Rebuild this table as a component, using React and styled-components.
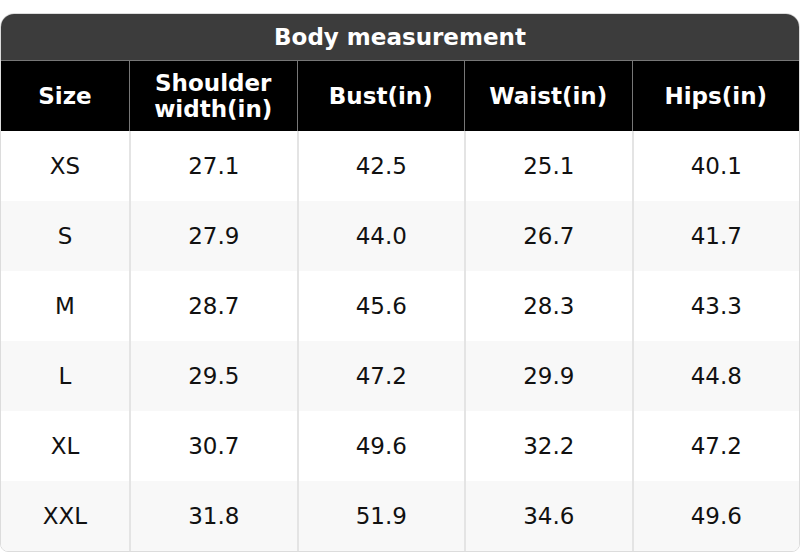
import React from 'react';
import styled, { createGlobalStyle } from 'styled-components';

const GlobalStyle = createGlobalStyle`
  html, body {
    margin: 0;
    padding: 0;
    background: #fff;
    font-family: "DejaVu Sans", "Liberation Sans", sans-serif;
  }
`;

const Page = styled.div`
  padding-top: 13px;
  width: 800px;
`;

const Card = styled.div`
  border: 1px solid #dcdcdc;
  border-radius: 14px 14px 8px 8px;
  overflow: hidden;
  box-sizing: border-box;
`;

const Title = styled.div`
  background: #3c3c3c;
  color: #fff;
  font-weight: bold;
  font-size: 23px;
  height: 46px;
  display: flex;
  align-items: center;
  justify-content: center;
  border-bottom: 1px solid #777;
`;

const Row = styled.div`
  display: grid;
  grid-template-columns: 128px 1fr 1fr 1fr 1fr;
  height: 70px;
  background: ${(p) => (p.$head ? '#000' : p.$alt ? '#f8f8f8' : '#fff')};
  color: ${(p) => (p.$head ? '#fff' : '#111')};
`;

const Cell = styled.div`
  display: flex;
  align-items: center;
  justify-content: center;
  text-align: center;
  font-size: 23px;
  font-weight: ${(p) => (p.$head ? 'bold' : 'normal')};
  line-height: 26px;
  border-left: ${(p) => (p.$first ? 'none' : p.$head ? '1px solid #777' : '2px solid #e4e4e4')};
  padding-bottom: ${(p) => (p.$head ? '0' : '1px')};
`;

const headers = ['Size', 'Shoulder\nwidth(in)', 'Bust(in)', 'Waist(in)', 'Hips(in)'];

const data = [
  ['XS', '27.1', '42.5', '25.1', '40.1'],
  ['S', '27.9', '44.0', '26.7', '41.7'],
  ['M', '28.7', '45.6', '28.3', '43.3'],
  ['L', '29.5', '47.2', '29.9', '44.8'],
  ['XL', '30.7', '49.6', '32.2', '47.2'],
  ['XXL', '31.8', '51.9', '34.6', '49.6'],
];

export default function App() {
  return (
    <Page>
      <GlobalStyle />
      <Card>
        <Title>Body measurement</Title>
        <Row $head>
          {headers.map((h, i) => (
            <Cell key={h} $head $first={i === 0}>
              {h.split('\n').map((line, j) => (
                <React.Fragment key={j}>
                  {j > 0 && <br />}
                  {line}
                </React.Fragment>
              ))}
            </Cell>
          ))}
        </Row>
        {data.map((r, i) => (
          <Row key={r[0]} $alt={i % 2 === 1}>
            {r.map((v, j) => (
              <Cell key={j} $first={j === 0}>{v}</Cell>
            ))}
          </Row>
        ))}
      </Card>
    </Page>
  );
}
